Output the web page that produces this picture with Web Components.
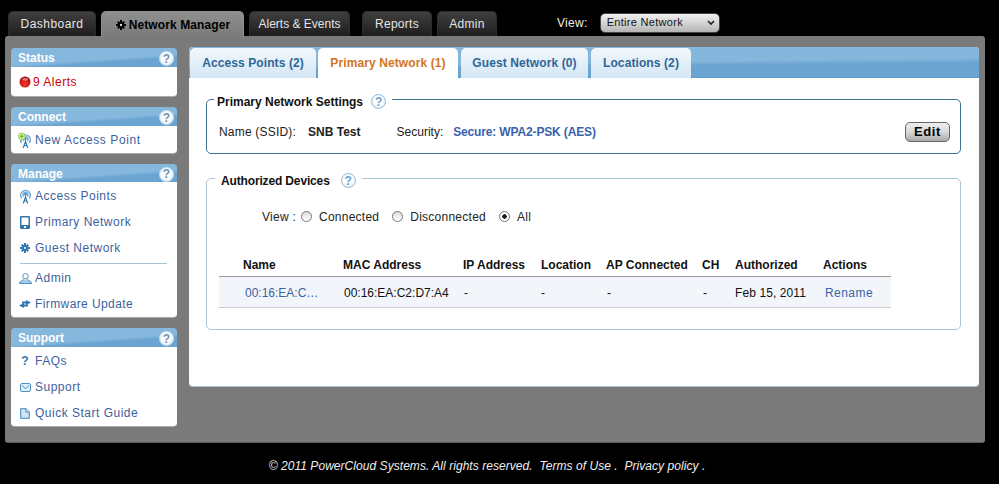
<!DOCTYPE html>
<html>
<head>
<meta charset="utf-8">
<title>Network Manager</title>
<style>
html, body { margin: 0; background: #000; }
body { font: 12px "Liberation Sans", Arial, sans-serif; letter-spacing: .5px; width: 999px; height: 484px; overflow: hidden; }
</style>
</head>
<body>
<app-shell>
    <top-bar slot="top">
        <top-tab style="width:88px">Dashboard</top-tab>
        <top-tab active icon="gear" style="width:143px">Network Manager</top-tab>
        <top-tab style="width:101px;letter-spacing:0">Alerts &amp; Events</top-tab>
        <top-tab style="width:70px;margin-left:7px;letter-spacing:.3px">Reports</top-tab>
        <top-tab style="width:60px;letter-spacing:.3px">Admin</top-tab>
        <view-select></view-select>
    </top-bar>

    <side-panel slot="side" title="Status" tight>
        <side-link icon="alert" alert>9 Alerts</side-link>
    </side-panel>
    <side-panel slot="side" title="Connect">
        <side-link icon="newap" style="letter-spacing:.6px">New Access Point</side-link>
    </side-panel>
    <side-panel slot="side" title="Manage" short>
        <side-link icon="ap">Access Points</side-link>
        <side-link icon="device">Primary Network</side-link>
        <side-link icon="gear">Guest Network</side-link>
        <side-rule></side-rule>
        <side-link icon="person">Admin</side-link>
        <side-link icon="arrows" style="letter-spacing:.4px">Firmware Update</side-link>
    </side-panel>
    <side-panel slot="side" title="Support">
        <side-link icon="question">FAQs</side-link>
        <side-link icon="mail">Support</side-link>
        <side-link icon="doc">Quick Start Guide</side-link>
    </side-panel>

    <content-panel slot="main">
        <content-tab slot="tabs" style="width:126px">Access Points (2)</content-tab>
        <content-tab slot="tabs" active style="width:140px">Primary Network (1)</content-tab>
        <content-tab slot="tabs" style="width:127px;margin-left:1px">Guest Network (0)</content-tab>
        <content-tab slot="tabs" style="width:100px;margin-left:1px">Locations (2)</content-tab>

        <field-box label="Primary Network Settings" dark>
            <settings-row></settings-row>
        </field-box>
        <field-box label="Authorized Devices" indent>
            <view-filter></view-filter>
            <device-table></device-table>
        </field-box>
    </content-panel>

    <page-footer slot="footer"></page-footer>
</app-shell>

<script>
// small inline icons, keyed by name
const ICONS = {
    gear: `<svg viewBox="0 0 12 12" width="10" height="10"><g fill="currentColor"><circle cx="6" cy="6" r="3.8"/><path d="M4.8 0h2.4v2.5H4.8zM4.8 9.5h2.4V12H4.8zM0 4.8h2.5v2.4H0zM9.5 4.8H12v2.4H9.5zM1.2 2.9l1.7-1.7 1.7 1.7-1.7 1.7zM7.4 9.1l1.7-1.7 1.7 1.7-1.7 1.7zM1.2 9.1l1.7-1.7 1.7 1.7-1.7 1.7zM7.4 2.9l1.7-1.7 1.7 1.7-1.7 1.7z"/></g><circle cx="6" cy="6" r="1.4" fill="#d8e4ee"/></svg>`,
    alert: `<svg viewBox="0 0 12 12" width="12" height="12"><defs><radialGradient id="r" cx=".5" cy=".7" r=".7"><stop offset="0" stop-color="#f23a30"/><stop offset=".7" stop-color="#c81212"/><stop offset="1" stop-color="#7a0c0c"/></radialGradient></defs><circle cx="6" cy="6" r="5.5" fill="url(#r)"/><ellipse cx="6" cy="3.400" rx="3" ry="1.300" fill="#f08a8a" opacity=".8"/></svg>`,
    ap: `<svg viewBox="0 0 14 16" width="13" height="15" fill="none" stroke="#6aa7d6"><path d="M3 10a5.2 5.2 0 1 1 8 0" stroke-width="1.6"/><path d="M5 8a2.7 2.7 0 1 1 4 0" stroke-width="1.4"/><circle cx="7" cy="5.6" r="1.3" fill="#2f77b0" stroke="none"/><path d="M7 7v2M7 8.5L4.6 15.5M7 8.5l2.4 7M5.4 12.8h3.2" stroke="#2f77b0" stroke-width="1.2"/></svg>`,
    newap: `<svg viewBox="0 0 15 17" width="15" height="17" fill="none" stroke="#6aa7d6"><path d="M4 11a5.2 5.2 0 1 1 8 0" stroke-width="1.6"/><path d="M6 9a2.7 2.7 0 1 1 4 0" stroke-width="1.4"/><circle cx="8" cy="6.8" r="1.2" fill="#2f77b0" stroke="none"/><path d="M8 8v2M8 9.5L5.6 16.5M8 9.5l2.4 7M6.4 13.8h3.2" stroke="#2f77b0" stroke-width="1.2"/><circle cx="4" cy="4" r="3.6" fill="#d9efb0" stroke="#9cc94a"/><path d="M4 2v4M2 4h4" stroke="#6aa52a" stroke-width="1.1"/></svg>`,
    device: `<svg viewBox="0 0 10 13" width="10" height="13"><path d="M1.2 0h7.6A1.2 1.2 0 0 1 10 1.2v10.6A1.2 1.2 0 0 1 8.800 13H1.200A1.200 1.200 0 0 1 0 11.800V1.200A1.200 1.200 0 0 1 1.200 0z" fill="#2f77b0"/><rect x="1.500" y="1.500" width="7" height="7.500" fill="#fff"/><rect x="4" y="10" width="2" height="2" fill="#fff"/></svg>`,
    person: `<svg viewBox="0 0 13 11" width="13" height="11" fill="none" stroke="#4f90c2"><circle cx="6.500" cy="3.200" r="2.700"/><path d="M4.500 6.500L.5 9.500v1h12v-1L8.500 6.500" fill="#a9cde8"/></svg>`,
    arrows: `<svg viewBox="0 0 12 8" width="12" height="8" fill="#2f77b0"><path d="M7 0l5 2.500L7 5V3.500H3v-2h4zM5 3v1.500h4v2H5V8L0 5.500z"/></svg>`,
    mail: `<svg viewBox="0 0 11 9" width="11" height="9" fill="#e4f0f8" stroke="#4f90c2"><rect x=".5" y=".5" width="10" height="8" rx="1.500"/><path d="M2 2.500l3.500 3 3.500-3" fill="none"/></svg>`,
    doc: `<svg viewBox="0 0 10 11" width="10" height="11" fill="#cfe3f2" stroke="#3f85bb"><path d="M.7.700h5.500L9.300 3.800v6.500H.7z"/><path d="M6 .700v3.300h3.300" fill="#fff"/></svg>`
};

// builds a custom element from a shadow template string
function component(name, html, init) {
    const template = document.createElement('template');
    template.innerHTML = html;
    customElements.define(name, class extends HTMLElement {
        constructor() {
            super();
            this.attachShadow({mode: 'open'}).appendChild(template.content.cloneNode(true));
        }
        connectedCallback() {
            if (init) init(this, this.shadowRoot);
        }
    });
}

component('app-shell', `<style>
:host { display: block; width: 999px; height: 484px; }
#top { height: 36px; padding: 11px 0 0 8px; box-sizing: border-box; }
#body { display: flex; gap: 12px; width: 980px; height: 407px; margin-left: 5px; padding: 11px 6px 0 6px; box-sizing: border-box; background: #7a7a7a; border-radius: 3px; border-bottom: 1px solid #5b5b5b; }
#side { display: flex; flex-direction: column; gap: 10px; width: 166px; padding-top: 1px; }
</style>
<div id="top"><slot name="top"></slot></div>
<div id="body">
    <div id="side"><slot name="side"></slot></div>
    <slot name="main"></slot>
</div>
<slot name="footer"></slot>`);

component('top-bar', `<style>
:host { display: flex; align-items: flex-start; gap: 5px; height: 25px; }
</style><slot></slot>`);

component('top-tab', `<style>
:host { display: flex; align-items: center; justify-content: center; gap: 3px; height: 25px; box-sizing: border-box; color: #e4e4e4; font-size: 12px; letter-spacing: .45px; background: linear-gradient(#3f3f3f, #1e1e1e); border: 1px solid #2b2b2b; border-bottom: 0; border-radius: 5px 5px 0 0; }
:host([active]) { height: 26px; padding-left: 1px; color: #000; font-weight: bold; letter-spacing: .1px; background: linear-gradient(#8f8f8f, #7a7a7a); border-color: #8f8f8f; }
svg { display: block; }
</style><span id="i"></span><slot></slot>`, (el, root) => {
    const icon = root.querySelector('#i');
    if (el.hasAttribute('icon')) icon.innerHTML = ICONS[el.getAttribute('icon')];
    else icon.remove();
});

component('view-select', `<style>
:host { display: flex; align-items: center; gap: 12px; height: 24px; margin-left: 55px; color: #eee; font-size: 12px; letter-spacing: .3px; }
#wrap { display: grid; align-items: center; width: 120px; height: 20px; }
select { grid-area: 1 / 1; appearance: none; width: 120px; height: 20px; padding: 0 0 2px 6px; border: 1px solid #444; border-radius: 5px; background: linear-gradient(#f0f0f0, #d4d4d4 50%, #b4b4b4); color: #111; font: 11px "Liberation Sans", Arial, sans-serif; letter-spacing: .3px; }
svg { grid-area: 1 / 1; justify-self: end; margin-right: 5px; pointer-events: none; }
</style>
<span>View:</span>
<div id="wrap">
    <select><option>Entire Network</option></select>
    <svg viewBox="0 0 8 6" width="8" height="6" fill="none" stroke="#222" stroke-width="1.6"><path d="M1 1l3 3 3-3"/></svg>
</div>`);

component('help-icon', `<style>
:host { display: inline-flex; width: 15px; height: 15px; align-items: center; justify-content: center; box-sizing: border-box; border-radius: 50%; font: bold 12px "Liberation Sans", Arial, sans-serif; letter-spacing: 0; color: #6fa3cc; background: radial-gradient(circle at 50% 40%, #fff 40%, #cfe3f2); border: 1px solid #8dbbdd; }
:host([light]) { color: #6f95b5; background: radial-gradient(circle at 50% 45%, #f8fbfd 50%, #c8dcec); border-color: #cfe2f0; }
</style>?`);

component('side-panel', `<style>
:host { display: block; width: 166px; }
header { display: flex; align-items: center; justify-content: space-between; height: 19px; padding: 2px 3px 0 7px; box-sizing: border-box; color: #fff; font-weight: bold; letter-spacing: 0; font-size: 12px; background: linear-gradient(176deg, #86b8dd 0 58%, #6ba4d1 68%); border-radius: 4px 4px 0 0; }
:host([short]) header { height: 18px; }
#t { margin-top: -1px; }
#body { padding: 1px 0 0; background: #fff; border-radius: 0 0 4px 4px; border-bottom: 1px solid #aaa; box-sizing: border-box; }
:host([tight]) #body { padding: 2px 0 1px; }
</style>
<header><span id="t"></span><help-icon light></help-icon></header>
<div id="body"><slot></slot></div>`, (el, root) => {
    root.querySelector('#t').textContent = el.getAttribute('title');
    el.removeAttribute('title');
});

component('side-link', `<style>
:host { display: flex; align-items: center; height: 26px; color: #3d5f9e; font-size: 12px; }
:host([alert]) { color: #c00; }
#i { display: flex; justify-content: center; align-items: center; width: 14px; margin: 0 3px 0 7px; color: #2f77b0; }
:host([alert]) #i { width: 12px; margin: 0 2px 0 8px; }
#q { font-weight: bold; letter-spacing: 0; }
svg { display: block; }
</style><span id="i"></span><slot></slot>`, (el, root) => {
    const name = el.getAttribute('icon');
    root.querySelector('#i').innerHTML = name === 'question' ? '<span id="q">?</span>' : ICONS[name];
});

component('side-rule', `<style>
:host { display: flex; align-items: center; height: 4px; padding: 0 10px 0 9px; }
div { flex: 1; height: 1px; background: #a8c4d8; }
</style><div></div>`);

component('content-panel', `<style>
:host { display: block; width: 790px; height: 340px; background: #fff; border-radius: 4px; border-bottom: 1px solid #a6c3d8; box-sizing: border-box; }
nav { display: flex; gap: 2px; height: 31px; padding: 1px 0 0 1px; box-sizing: border-box; background: linear-gradient(179.4deg, #85b7dc 0 50%, #6ba4d1 62%); border-bottom: 1px solid #5f9bc9; border-radius: 4px 4px 0 0; }
#body { display: flex; flex-direction: column; gap: 14px; padding: 11px 18px 0 17px; }
</style>
<nav><slot name="tabs"></slot></nav>
<div id="body"><slot></slot></div>`);

component('content-tab', `<style>
:host { display: flex; align-items: center; justify-content: center; height: 30px; box-sizing: border-box; color: #2f6595; font-weight: bold; letter-spacing: .1px; font-size: 12px; background: linear-gradient(#f2f8fc, #d3e6f5); border-radius: 5px 5px 0 0; }
:host([active]) { height: 31px; padding-bottom: 1px; color: #d2751c; background: #fff; }
</style><slot></slot>`);

component('field-box', `<style>
:host { display: block; }
fieldset { margin: 0; padding: 0; border: 1px solid #a9c9da; border-radius: 5px; }
:host([dark]) fieldset { border-color: #3f7396; }
legend { display: flex; align-items: center; gap: 8px; margin-left: 7px; padding: 5px 6px 0 3px; color: #111; font-weight: bold; letter-spacing: 0; font-size: 12px; }
:host([indent]) legend { margin-left: 8px; padding-left: 6px; gap: 11px; letter-spacing: -.15px; }
</style>
<fieldset><legend><span id="t"></span><help-icon></help-icon></legend><slot></slot></fieldset>`, (el, root) => {
    root.querySelector('#t').textContent = el.getAttribute('label');
});

component('settings-row', `<style>
:host { display: flex; align-items: center; height: 43px; padding: 1px 10px 0 12px; color: #222; font-size: 12px; letter-spacing: .2px; }
b { color: #222; letter-spacing: 0; }
#name { margin-left: 12px; }
#sec { margin-left: 36px; letter-spacing: 0; }
#val { margin-left: 10px; color: #3a62ad; letter-spacing: -.15px; flex: 1; }
button { width: 45px; height: 20px; padding: 0; border: 1px solid #666; border-radius: 5px; background: linear-gradient(#eee, #d8d8d8 50%, #aaa); color: #000; font: bold 13px "Liberation Sans", Arial, sans-serif; letter-spacing: .6px; }
</style>
<span>Name (SSID):</span><b id="name">SNB Test</b><span id="sec">Security:</span><b id="val">Secure: WPA2-PSK (AES)</b><button>Edit</button>`);

component('view-filter', `<style>
:host { display: flex; align-items: center; height: 22px; margin-top: 18px; padding-left: 55px; color: #222; font-size: 12px; letter-spacing: .25px; }
i { font-style: normal; }
label { display: flex; align-items: center; }
input { appearance: none; display: block; width: 11px; height: 11px; margin: 0 7px 1px 0; border: 1px solid #777; border-radius: 50%; background: linear-gradient(#ddd, #fff); box-sizing: border-box; }
input:checked { background: radial-gradient(circle, #222 0 2px, #fff 2.5px); }
#a { margin-left: 5px; }
#b { margin-left: 13px; }
#c { margin-left: 13px; }
</style>
<i>View :</i>
<label id="a"><input type="radio" name="v">Connected</label>
<label id="b"><input type="radio" name="v">Disconnected</label>
<label id="c"><input type="radio" name="v" checked>All</label>`);

component('device-table', `<style>
:host { display: block; width: 672px; margin: 24px 0 21px 12px; color: #111; font-size: 12px; }
.row { display: grid; grid-template-columns: 124px 120px 78px 65px 96px 33px 88px 68px; align-items: center; }
#head { height: 25px; padding-top: 2px; box-sizing: border-box; border-bottom: 1px solid #999; font-weight: bold; letter-spacing: 0; }
#head span:first-child { padding-left: 24px; }
#data { height: 31px; padding-top: 1px; background: #f2f6fa; border-bottom: 1px solid #ccc; box-sizing: border-box; letter-spacing: 0; }
#data span { padding-left: 1px; }
#data span:first-child { padding-left: 26px; }
#data span:nth-child(4), #data span:nth-child(7) { padding-left: 0; }
#data span:nth-child(7) { letter-spacing: .1px; }
#data span:nth-child(8) { padding-left: 2px; letter-spacing: .45px; }
a { color: #3a62a5; }
</style>
<div class="row" id="head"><span>Name</span><span>MAC Address</span><span>IP Address</span><span>Location</span><span>AP Connected</span><span>CH</span><span>Authorized</span><span>Actions</span></div>
<div class="row" id="data"><span><a>00:16:EA:C…</a></span><span>00:16:EA:C2:D7:A4</span><span>-</span><span>-</span><span>-</span><span>-</span><span>Feb 15, 2011</span><span><a>Rename</a></span></div>`);

component('page-footer', `<style>
:host { display: block; width: 974px; padding-top: 16px; text-align: center; color: #eee; font-size: 12px; font-style: italic; letter-spacing: .05px; white-space: pre; }
</style>© 2011 PowerCloud Systems. All rights reserved.  Terms of Use .  Privacy policy .`);
</script>
</body>
</html>
